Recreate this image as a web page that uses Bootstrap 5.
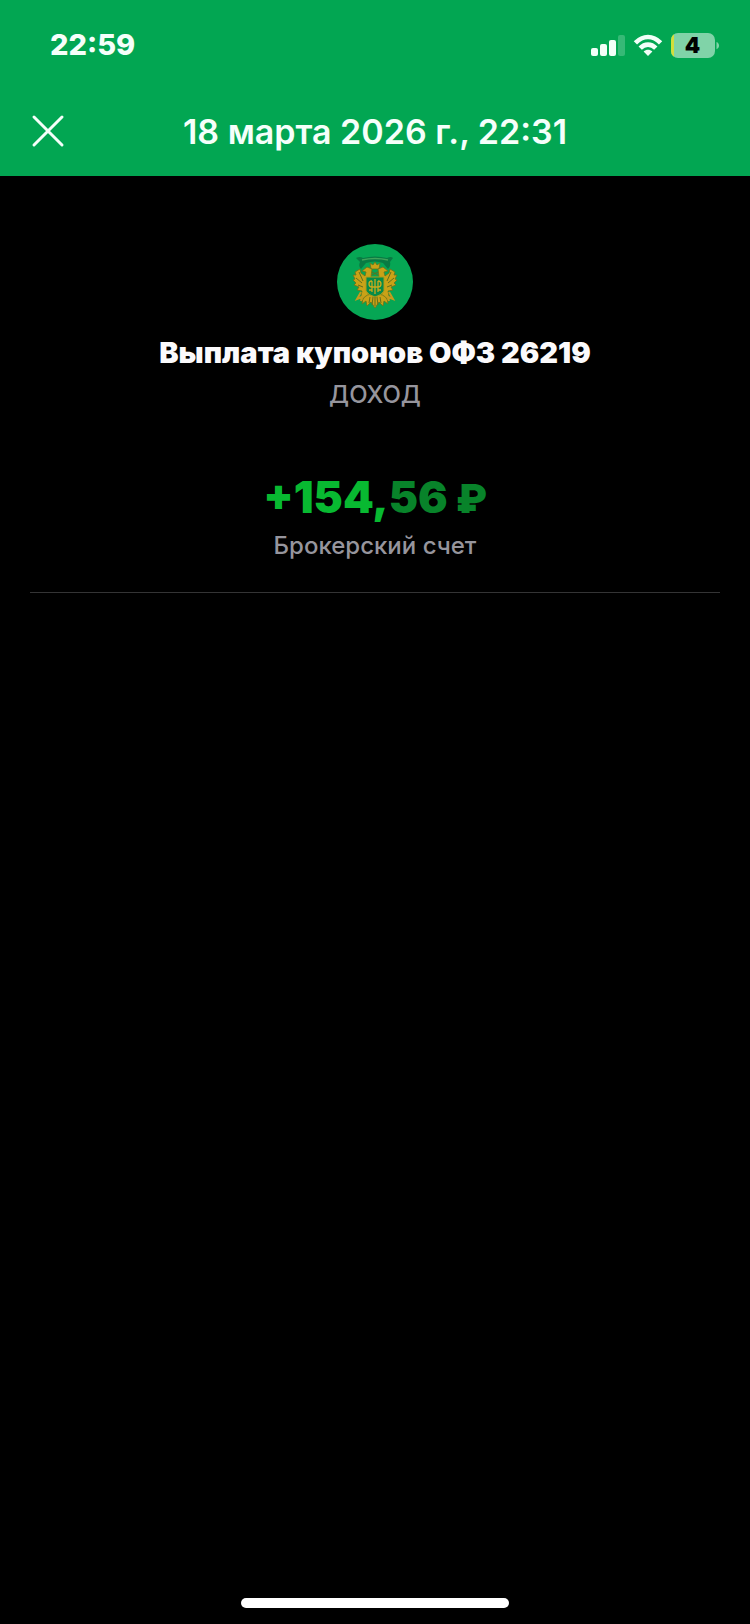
<!DOCTYPE html>
<html lang="ru">
<head>
<meta charset="utf-8">
<meta name="viewport" content="width=device-width, initial-scale=1">
<title>Выплата купонов ОФЗ 26219</title>
<link href="https://cdn.jsdelivr.net/npm/bootstrap@5.3.0/dist/css/bootstrap.min.css" rel="stylesheet">
<style>
  body { background: #000; color: #fbfafc; font-family: Inter, "Liberation Sans", sans-serif; }
  .app-head { background: #02a652; color: #f5fffa; }
  .status-row { height: 88px; padding: 2px 30px 0 50px; }
  .clock { font-size: 29px; line-height: 36px; font-weight: 800; }
  .title-row { height: 88px; grid-template-columns: 48px 1fr 48px; padding: 0 24px 2px; }
  .title-row h1 { font-size: 34px; line-height: 40px; font-weight: 600; padding-top: 2px; }
  .close-btn { width: 48px; height: 48px; color: inherit; }
  .issuer { padding-top: 68px; }
  .op-name { font-size: 29px; line-height: 36px; font-weight: 900; margin-top: 15px; }
  .caption { font-size: 24px; line-height: 32px; font-weight: 500; color: #96959d; }
  .op-kind { margin-top: 8px; }
  .amount { font-size: 44px; line-height: 52px; font-weight: 900; color: #08b931; margin-top: 60px; }
  .amount small { font-size: inherit; color: #08832a; }
  .amount .currency { font-size: 40px; line-height: 1; }
  .account { margin-top: 7px; }
  .rule { border-top: 1px solid #343435; margin: 30px 30px 0; }
  .home-bar { width: 268px; height: 10px; background: #fff; margin-bottom: 16px; }
</style>
</head>
<body class="d-flex flex-column min-vh-100">
<header class="app-head">
  <div class="status-row d-flex align-items-center justify-content-between">
    <span class="clock">22:59</span>
    <div class="d-flex align-items-center">
      <svg width="130" height="28" viewBox="0 0 130 28" role="img" aria-label="Сеть, Wi-Fi, батарея 4 процента">
        <g fill="#f2fff8">
          <rect x="1" y="17" width="7" height="8" rx="2"/>
          <rect x="10" y="13" width="7" height="12" rx="2"/>
          <rect x="19" y="9" width="7" height="16" rx="2"/>
          <rect x="28" y="4" width="7" height="21" rx="2" opacity=".22"/>
        </g>
        <g fill="none" stroke="#f2fff8" stroke-width="4.6">
          <path d="M45.4 11.8C53 4 63 4 70.600 11.800"/>
          <path d="M50.200 17.200C54.800 12.400 61.200 12.400 65.800 17.200"/>
        </g>
        <path d="M53.600 20.500C56.300 18.200 59.700 18.200 62.400 20.500L58 25Z" fill="#f2fff8"/>
        <clipPath id="cell"><rect x="81" y="2" width="44" height="25" rx="7"/></clipPath>
        <g clip-path="url(#cell)">
          <rect x="81" y="2" width="44" height="25" fill="#80d3a8"/>
          <rect x="81" y="2" width="3" height="25" fill="#d2df3c"/>
        </g>
        <path d="M126.500 11c3.400 1.200 3.400 6 0 7.200z" fill="#80d3a8"/>
        <text x="102.500" y="22" text-anchor="middle" font-size="22" font-weight="900" fill="#000">4</text>
      </svg>
    </div>
  </div>
  <div class="title-row d-grid align-items-center">
    <button type="button" class="close-btn btn border-0 p-0 d-flex align-items-center justify-content-center" aria-label="Закрыть">
      <svg width="34" height="34" viewBox="0 0 34 34" fill="none" stroke="currentColor" stroke-width="3" stroke-linecap="round"><path d="M3 3 31 31M31 3 3 31"/></svg>
    </button>
    <h1 class="text-center mb-0">18 марта 2026 г., 22:31</h1>
  </div>
</header>
<main class="flex-grow-1 text-center">
  <div class="issuer">
    <svg class="d-block mx-auto" width="76" height="76" viewBox="0 0 76 76" aria-hidden="true">
      <circle cx="38" cy="38" r="38" fill="#06a654"/>
      <path d="M19 14q4-2 7 0 12-3 24 0 4-2 6 0l-3 4q1 4-2 7l-5-6q-8-3-17 0l-5 6q-3-3-1-7z" fill="#087a43"/>
      <path d="M25 16q13-3 26 0" fill="none" stroke="#41a45a" stroke-width="1.500"/>
      <g fill="#c9a217" stroke="#68731a" stroke-width=".8">
        <path d="M33 19l3 2 2-3 2 3 3-2-1 6h-8z"/>
        <path d="M35 25l-5-2-5 4 4 1-1 4-4-3-1-4-5 3 1 3-3 0 2 4-2 1 3 3-2 2 5 2-2 3 5 1-1 5-3 3 4-1-1 3 5-2 5 3V33z"/>
        <path d="M41 25l5-2 5 4-4 1 1 4 4-3 1-4 5 3-1 3 3 0-2 4 2 1-3 3 2 2-5 2 2 3-5 1 1 5 3 3-4-1 1 3-5-2-5 3V33z"/>
        <path d="M35 50q-10 1-10 10l4-3 1 5 4-4 4 6 4-6 4 4 1-5 4 3q0-9-10-10z"/>
      </g>
      <path d="M29 33h18v14q-2 4-9 6-7-2-9-6z" fill="#078b48" stroke="#b09b1b"/>
      <g fill="none" stroke="#c9aa1d" stroke-width="1.300">
        <path d="M38 35v15M35 37q-3 0-3 3t3 3h6q3 0 3-3t-3-3M35 37v11M41 37v11M32 46h3M41 46h3"/>
      </g>
      <path d="M22 28l4 9m-7-3 6 5m-4 2 5 2m28-15-4 9m7-3-6 5m4 2-5 2M33 53l-1 6m4-6-1 8m3-8v9m2-9 1 8m2-8 1 6M35 28l6 3m0-3-6 3" fill="none" stroke="#626f1c"/>
      <path d="M24 48l-4 7 5-2-1 4m28-9 4 7-5-2 1 4" fill="none" stroke="#c49b1c" stroke-width="2"/>
    </svg>
    <h2 class="op-name mb-0">Выплата купонов ОФЗ 26219</h2>
    <p class="caption op-kind mb-0">ДОХОД</p>
  </div>
  <p class="amount mb-0">+154,<small>56<span class="currency">&nbsp;₽</span></small></p>
  <p class="caption account mb-0">Брокерский счет</p>
  <div class="rule"></div>
</main>
<div class="home-bar rounded-pill mx-auto"></div>
<script src="https://cdn.jsdelivr.net/npm/bootstrap@5.3.0/dist/js/bootstrap.bundle.min.js"></script>
</body>
</html>
